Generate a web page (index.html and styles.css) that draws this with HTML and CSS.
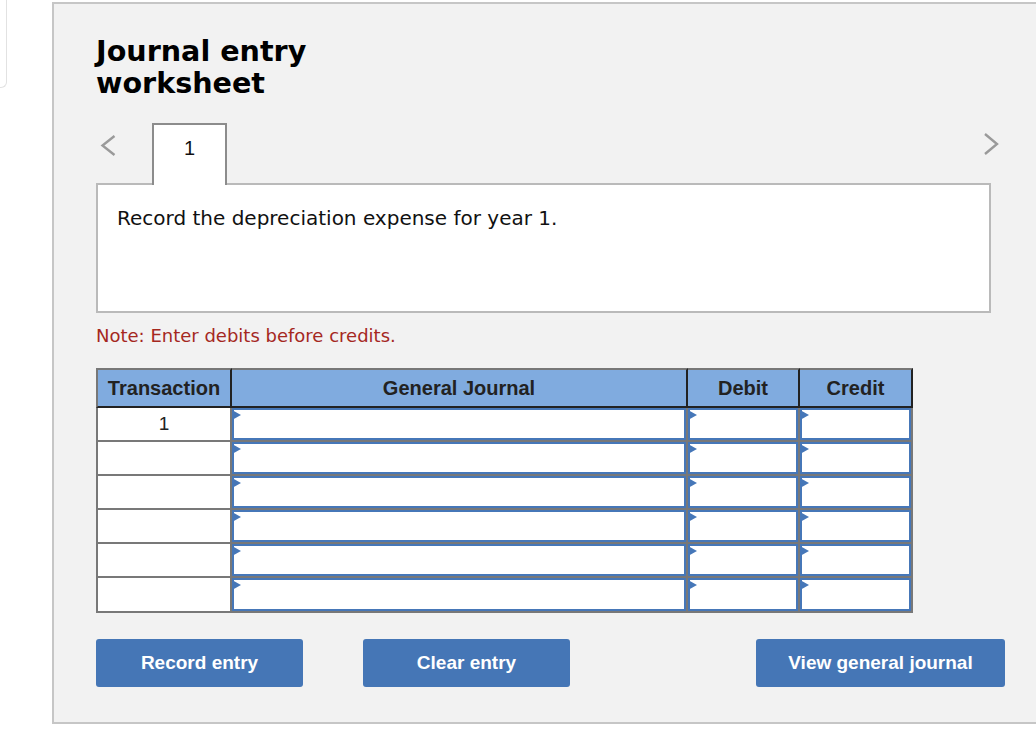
FILE: index.html
```html
<!DOCTYPE html>
<html lang="en">
<head>
<meta charset="utf-8">
<title>Journal entry worksheet</title>
<link rel="stylesheet" href="styles.css">
</head>
<body>
<div class="page">
  <div class="stub"></div>
  <section class="panel">
    <h1 class="title">Journal entry<br>worksheet</h1>
    <div class="tabs">
      <svg class="nav nav-prev" width="18" height="24" viewBox="0 0 18 24" aria-hidden="true"><polyline points="15.5,3 3.5,12.5 15.5,22" /></svg>
      <div class="tab">1</div>
      <svg class="nav nav-next" width="18" height="24" viewBox="0 0 18 24" aria-hidden="true"><polyline points="3,1 15,11 3,21" /></svg>
    </div>
    <div class="prompt">Record the depreciation expense for year 1.</div>
    <p class="note">Note: Enter debits before credits.</p>
    <table class="journal">
      <thead>
        <tr>
          <th class="c-tr">Transaction</th>
          <th class="c-gj">General Journal</th>
          <th class="c-dr">Debit</th>
          <th class="c-cr">Credit</th>
        </tr>
      </thead>
      <tbody>
        <tr><td class="num">1</td><td class="in"><div class="field"></div></td><td class="in"><div class="field"></div></td><td class="in"><div class="field"></div></td></tr>
        <tr><td class="num"></td><td class="in"><div class="field"></div></td><td class="in"><div class="field"></div></td><td class="in"><div class="field"></div></td></tr>
        <tr><td class="num"></td><td class="in"><div class="field"></div></td><td class="in"><div class="field"></div></td><td class="in"><div class="field"></div></td></tr>
        <tr><td class="num"></td><td class="in"><div class="field"></div></td><td class="in"><div class="field"></div></td><td class="in"><div class="field"></div></td></tr>
        <tr><td class="num"></td><td class="in"><div class="field"></div></td><td class="in"><div class="field"></div></td><td class="in"><div class="field"></div></td></tr>
        <tr><td class="num"></td><td class="in"><div class="field"></div></td><td class="in"><div class="field"></div></td><td class="in"><div class="field"></div></td></tr>
      </tbody>
    </table>
    <div class="actions">
      <button class="btn btn-record" type="button">Record entry</button>
      <button class="btn btn-clear" type="button">Clear entry</button>
      <button class="btn btn-view" type="button">View general journal</button>
    </div>
  </section>
</div>
</body>
</html>
```

FILE: styles.css
```css
html, body {
  margin: 0;
  padding: 0;
  background: #ffffff;
  overflow: hidden;
}

.page {
  display: flex;
  align-items: flex-start;
  width: 1036px;
  height: 730px;
}

.stub {
  flex: none;
  box-sizing: border-box;
  width: 7px;
  height: 88px;
  border-right: 1px solid #e2e2e2;
  border-bottom: 1px solid #e2e2e2;
  border-bottom-right-radius: 6px;
}

.panel {
  flex: none;
  box-sizing: border-box;
  width: 1000px;
  height: 722px;
  margin: 2px 0 0 45px;
  border: 2px solid #c6c6c6;
  background: #f2f2f2;
  padding: 31px 0 0 42px;
}

.title {
  margin: 0;
  font-family: "DejaVu Sans", Verdana, sans-serif;
  font-weight: bold;
  font-size: 28.6px;
  line-height: 32px;
  color: #000;
}

.tabs {
  display: flex;
  align-items: flex-start;
  width: 904px;
  margin-top: 24px;
}

.nav {
  flex: none;
  margin-top: 10px;
}

.nav polyline {
  fill: none;
  stroke: #9a9a9a;
  stroke-width: 2.4;
  stroke-linecap: butt;
  stroke-linejoin: miter;
}

.nav-prev {
  margin-left: 3px;
}

.nav-next {
  margin-left: auto;
}

.tab {
  flex: none;
  position: relative;
  z-index: 1;
  box-sizing: border-box;
  width: 75px;
  height: 62px;
  margin-left: 35px;
  margin-bottom: -2px;
  padding-top: 11px;
  border: 2px solid #8c8c8c;
  border-bottom: none;
  background: #fff;
  text-align: center;
  font-family: "Liberation Sans", Arial, sans-serif;
  font-size: 20px;
  line-height: 24px;
  color: #111;
}

.prompt {
  box-sizing: border-box;
  width: 895px;
  height: 130px;
  border: 2px solid #bababa;
  background: #fff;
  padding: 21px 0 0 19px;
  font-family: "DejaVu Sans", Verdana, sans-serif;
  font-size: 20px;
  line-height: 24px;
  color: #111;
}

.note {
  margin: 12px 0 21px 0;
  font-family: "DejaVu Sans", Verdana, sans-serif;
  font-size: 18px;
  line-height: 22px;
  color: #a5281f;
}

.journal {
  border-collapse: separate;
  border-spacing: 0;
  table-layout: fixed;
  font-family: "Liberation Sans", Arial, sans-serif;
}

.journal th {
  box-sizing: border-box;
  height: 40px;
  padding: 0;
  background: #80abdf;
  border-top: 2px solid #787878;
  border-bottom: 2px solid #222;
  border-right: 2px solid #222;
  font-size: 20px;
  font-weight: bold;
  line-height: 23px;
  color: #222;
  text-align: center;
  vertical-align: middle;
}

.journal th.c-tr {
  border-left: 2px solid #787878;
  width: 136px;
}

.journal th.c-gj { width: 456px; }
.journal th.c-dr { width: 112px; }
.journal th.c-cr { width: 113px; }

.journal td {
  box-sizing: border-box;
  height: 34px;
  padding: 0;
  border-right: 2px solid #787878;
  border-bottom: 2px solid #787878;
  background: #fff;
  vertical-align: top;
}

.journal tbody tr:last-child td {
  height: 35px;
}

.journal td.num {
  border-left: 2px solid #787878;
  text-align: center;
  vertical-align: middle;
  font-size: 19px;
  line-height: 22px;
  color: #222;
}

.journal td.in {
  background: #f2f2f2;
}

.field {
  position: relative;
  box-sizing: border-box;
  height: 32px;
  border: 2px solid #4677b8;
  background: #fff;
}

.journal tbody tr:last-child .field {
  height: 33px;
}

.field::before {
  content: "";
  position: absolute;
  left: -2px;
  top: 0;
  width: 0;
  height: 0;
  border-left: 9px solid #4677b8;
  border-top: 5px solid transparent;
  border-bottom: 5px solid transparent;
}

.actions {
  display: flex;
  width: 909px;
  margin-top: 26px;
}

.btn {
  box-sizing: border-box;
  height: 48px;
  padding: 0;
  border: none;
  border-radius: 3px;
  background: #4576b6;
  color: #fff;
  font-family: "Liberation Sans", Arial, sans-serif;
  font-weight: bold;
  font-size: 19px;
  line-height: 22px;
  text-align: center;
  cursor: pointer;
}

.btn-record { width: 207px; }
.btn-clear { width: 207px; margin-left: 60px; }
.btn-view { width: 249px; margin-left: auto; }
```
